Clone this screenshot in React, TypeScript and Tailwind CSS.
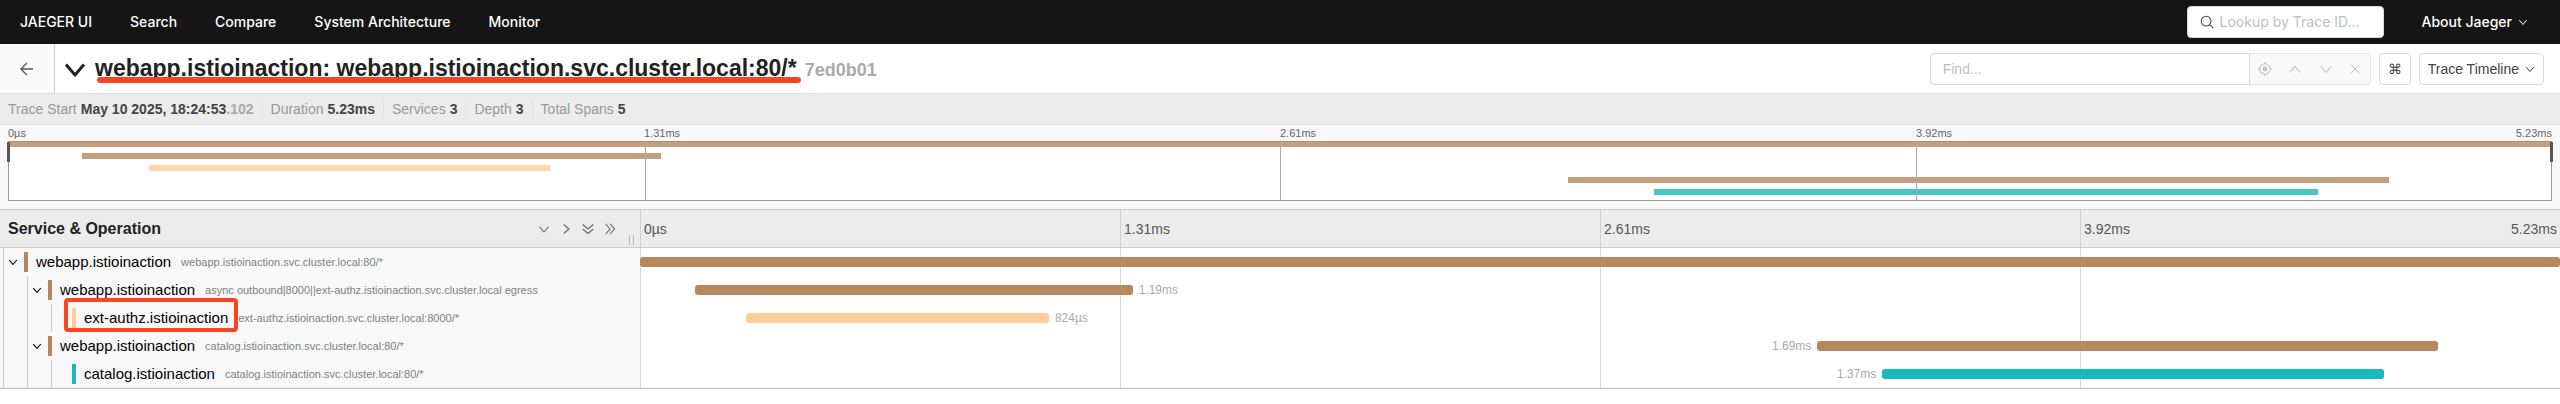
import { useState } from 'react';

const TICKS = ['0µs', '1.31ms', '2.61ms', '3.92ms'];

type Span = {
  service: string;
  operation: string;
  depth: number;
  hasChildren: boolean;
  color: string;
  start: number;
  width: number;
  label?: string;
  labelLeft?: boolean;
};

const SPANS: Span[] = [
  { service: 'webapp.istioinaction', operation: 'webapp.istioinaction.svc.cluster.local:80/*', depth: 0, hasChildren: true, color: '#b7885e', start: 0, width: 100 },
  { service: 'webapp.istioinaction', operation: 'async outbound|8000||ext-authz.istioinaction.svc.cluster.local egress', depth: 1, hasChildren: true, color: '#b7885e', start: 2.88, width: 22.78, label: '1.19ms' },
  { service: 'ext-authz.istioinaction', operation: 'ext-authz.istioinaction.svc.cluster.local:8000/*', depth: 2, hasChildren: false, color: '#ffcb99', start: 5.52, width: 15.78, label: '824µs' },
  { service: 'webapp.istioinaction', operation: 'catalog.istioinaction.svc.cluster.local:80/*', depth: 1, hasChildren: true, color: '#b7885e', start: 61.32, width: 32.32, label: '1.69ms', labelLeft: true },
  { service: 'catalog.istioinaction', operation: 'catalog.istioinaction.svc.cluster.local:80/*', depth: 2, hasChildren: false, color: '#17b8be', start: 64.7, width: 26.12, label: '1.37ms', labelLeft: true },
];

const STATS = [
  { name: 'Duration', value: '5.23ms' },
  { name: 'Services', value: '3' },
  { name: 'Depth', value: '3' },
  { name: 'Total Spans', value: '5' },
];

const ICONS = {
  down: 'M2 5 L8 12 L14 5',
  up: 'M2 12 L8 5 L14 12',
  right: 'M5 2 L12 8 L5 14',
  doubleDown: 'M1 2 L8 8 L15 2 M1 8 L8 14 L15 8',
  doubleRight: 'M2 1 L8 8 L2 15 M8 1 L14 8 L8 15',
  close: 'M2 2 L14 14 M14 2 L2 14',
  back: 'M15 8 H2 M8 1 L1 8 L8 15',
  search: 'M11 11 L15 15 M12.5 7 A5.5 5.5 0 1 1 1.5 7 A5.5 5.5 0 1 1 12.5 7',
};

function Icon({ name, className, stroke = 1.3 }: { name: keyof typeof ICONS; className: string; stroke?: number }) {
  return (
    <svg className={className} viewBox="0 0 16 16" fill="none" stroke="currentColor" strokeWidth={stroke}>
      <path d={ICONS[name]} />
    </svg>
  );
}

function TopNav() {
  return (
    <nav className="flex h-11 items-center bg-[#151515] pl-5 pr-8 font-[Inter] text-sm font-medium text-white">
      <div className="flex grow gap-[38px]">
        <a href="#home">JAEGER UI</a>
        <a href="#search">Search</a>
        <a href="#compare">Compare</a>
        <a href="#architecture">System Architecture</a>
        <a href="#monitor">Monitor</a>
      </div>
      <label className="mr-[38px] flex h-8 w-[197px] items-center gap-1.5 rounded border border-[#d9d9d9] bg-white px-3 font-normal">
        <Icon name="search" className="size-3.5 shrink-0 text-[#444]" stroke={1.2} />
        <input aria-label="Lookup by Trace ID" placeholder="Lookup by Trace ID..." className="w-full min-w-0 outline-none placeholder:text-[#bfbfbf]" />
      </label>
      <button className="flex items-center gap-1.5">
        About Jaeger
        <Icon name="down" className="size-2.5" stroke={1.6} />
      </button>
    </nav>
  );
}

function TraceHeader() {
  return (
    <header className="flex h-[50px] items-center border-b border-[#e0e0e0] bg-white pr-4">
      <a href="#back" aria-label="Back" className="flex h-full w-[55px] shrink-0 items-center justify-center border-r border-[#d0d0d0] bg-[#fafafa] text-[#555]">
        <Icon name="back" className="size-3.5" stroke={1.6} />
      </a>
      <button aria-label="Collapse header" className="mx-2">
        <Icon name="down" className="size-6 text-[#222]" stroke={2} />
      </button>
      <h1 className="flex grow items-baseline gap-2 whitespace-nowrap pb-0.5 font-bold">
        <span className="relative text-[23px] leading-8 text-[#222]">
          webapp.istioinaction: webapp.istioinaction.svc.cluster.local:80/*
          <span className="absolute -right-1 bottom-px left-0.5 h-1.5 rounded-full bg-[#f94423]" />
        </span>
        <small className="text-lg text-[#aaa]">7ed0b01</small>
      </h1>
      <input aria-label="Find" placeholder="Find..." className="h-8 w-80 rounded-l border border-[#d9d9d9] px-3 text-sm outline-none placeholder:text-[#bfbfbf]" />
      <div className="mr-2 flex h-8 w-[121px] items-center justify-around rounded-r border border-l-0 border-[#e4e4e4] bg-[#f9f9f9] text-[#c4c4c4]">
        <button aria-label="Locate">
          <svg className="size-3.5" viewBox="0 0 16 16" fill="none" stroke="currentColor" strokeWidth="1.3">
            <circle cx="8" cy="8" r="6" />
            <circle cx="8" cy="8" r="2.2" fill="currentColor" />
            <path d="M8 0v2M8 14v2M0 8h2M14 8h2" />
          </svg>
        </button>
        <button aria-label="Previous"><Icon name="up" className="size-3.5" /></button>
        <button aria-label="Next"><Icon name="down" className="size-3.5" /></button>
        <button aria-label="Clear"><Icon name="close" className="size-3" /></button>
      </div>
      <button aria-label="Keyboard shortcuts" className="mr-2 h-8 w-8 rounded border border-[#d9d9d9] text-sm text-[#444]">⌘</button>
      <button className="flex h-8 items-center gap-1.5 rounded border border-[#d9d9d9] px-2 text-sm text-[#444]">
        Trace Timeline
        <Icon name="down" className="size-2.5" stroke={1.6} />
      </button>
    </header>
  );
}

function Overview() {
  return (
    <dl className="flex h-[31px] items-center border-b border-[#ddd] bg-[#ececec] px-2 text-sm text-[#999]">
      <div className="flex gap-1">
        <dt>Trace Start</dt>
        <dd className="font-bold"><span className="text-[#444]">May 10 2025, 18:24:53</span><span className="text-[#aaa]">.102</span></dd>
      </div>
      {STATS.map((s) => (
        <div key={s.name} className="ml-2 flex gap-1 border-l border-[#e2e2e2] pl-2">
          <dt>{s.name}</dt>
          <dd className="font-bold text-[#444]">{s.value}</dd>
        </div>
      ))}
    </dl>
  );
}

function Minimap() {
  return (
    <section className="border-b border-[#ccc] bg-[#f8f8f8] px-2 pb-2">
      <div className="grid h-4 grid-cols-4 text-[11px] leading-4 text-[#666]">
        {TICKS.map((t, i) => (
          <span key={t} className="flex justify-between">
            {t}
            {i === 3 && <span>5.23ms</span>}
          </span>
        ))}
      </div>
      <div className="relative h-[60px] border border-[#999] bg-white">
        <div className="-mt-px">
          {SPANS.map((s, i) => (
            <div key={i} className="h-3">
              <div className="h-1.5 opacity-80" style={{ marginLeft: `${s.start}%`, width: `${s.width}%`, background: s.color }} />
            </div>
          ))}
        </div>
        <div className="absolute inset-0 grid grid-cols-4">
          {TICKS.map((t) => <i key={t} className="border-l border-[#aaa] first:border-l-0" />)}
        </div>
        <i className="absolute -left-0.5 top-0 h-5 w-[3px] bg-[#555]" />
        <i className="absolute -right-0.5 top-0 h-5 w-[3px] bg-[#555]" />
      </div>
    </section>
  );
}

function TimelineHeader() {
  return (
    <div className="flex h-[38px] border-b border-[#ccc] bg-[#ececec]">
      <div className="relative flex w-1/4 items-center gap-2.5 pl-2 pr-6 text-[#666]">
        <h3 className="grow text-base font-bold text-[#222]">Service &amp; Operation</h3>
        <button aria-label="Expand +1"><Icon name="down" className="size-3" stroke={1.5} /></button>
        <button aria-label="Collapse +1"><Icon name="right" className="size-3" stroke={1.5} /></button>
        <button aria-label="Expand all"><Icon name="doubleDown" className="size-3" stroke={1.5} /></button>
        <button aria-label="Collapse all"><Icon name="doubleRight" className="size-3" stroke={1.5} /></button>
        <i className="absolute bottom-0.5 right-1.5 h-2.5 w-[5px] border-x border-[#bbb]" />
      </div>
      <div className="grid w-3/4 grid-cols-4 text-sm text-[#555]">
        {TICKS.map((t, i) => (
          <span key={t} className="flex items-center justify-between border-l border-[#d0d0d0] px-[3px]">
            {t}
            {i === 3 && <span>5.23ms</span>}
          </span>
        ))}
      </div>
    </div>
  );
}

function SpanRow({ span, marked }: { span: Span; marked: boolean }) {
  const [open, setOpen] = useState(true);
  return (
    <div className="flex h-7">
      <div className="flex w-1/4 items-center whitespace-nowrap bg-[#f8f8f8] pl-[3px]">
        {Array.from({ length: span.depth }, (_, i) => (
          <i key={i} className="h-full w-6 shrink-0 border-l border-[#ccc]" />
        ))}
        <span className="flex h-full w-[21px] shrink-0 items-center border-l border-[#ccc]">
          {span.hasChildren && (
            <button aria-label="Toggle children" onClick={() => setOpen(!open)} className="ml-1">
              <Icon name={open ? 'down' : 'right'} className="size-2.5" stroke={1.7} />
            </button>
          )}
        </span>
        <span className="h-5 w-1 shrink-0" style={{ background: span.color }} />
        <span className="relative ml-2 text-[15px] leading-5 text-black">
          {span.service}
          {marked && <i className="absolute -bottom-1 -left-5 -right-2.5 -top-2.5 rounded-sm border-4 border-[#f94423]" />}
        </span>
        <small className="ml-2.5 text-[11px] text-[#808080]">{span.operation}</small>
      </div>
      <div className="relative w-3/4">
        <div className="absolute inset-0 grid grid-cols-4">
          {TICKS.map((t) => <i key={t} className="border-l border-[#d8d8d8]" />)}
        </div>
        <div className="relative flex h-full items-center" style={{ marginLeft: `${span.start}%`, width: `${span.width}%` }}>
          <div className="h-2.5 w-full rounded-[3px]" style={{ background: span.color }} />
          {span.label && (
            <span className={span.labelLeft ? 'absolute right-full mr-1.5 text-xs text-[#aaa]' : 'absolute left-full ml-1.5 text-xs text-[#aaa]'}>
              {span.label}
            </span>
          )}
        </div>
      </div>
    </div>
  );
}

export default function App() {
  return (
    <div className="min-h-screen bg-white font-['Liberation_Sans',Arial,sans-serif]">
      <TopNav />
      <TraceHeader />
      <Overview />
      <Minimap />
      <main>
        <TimelineHeader />
        <div className="border-b border-[#bbb]">
          {SPANS.map((s, i) => <SpanRow key={i} span={s} marked={i === 2} />)}
        </div>
      </main>
    </div>
  );
}
